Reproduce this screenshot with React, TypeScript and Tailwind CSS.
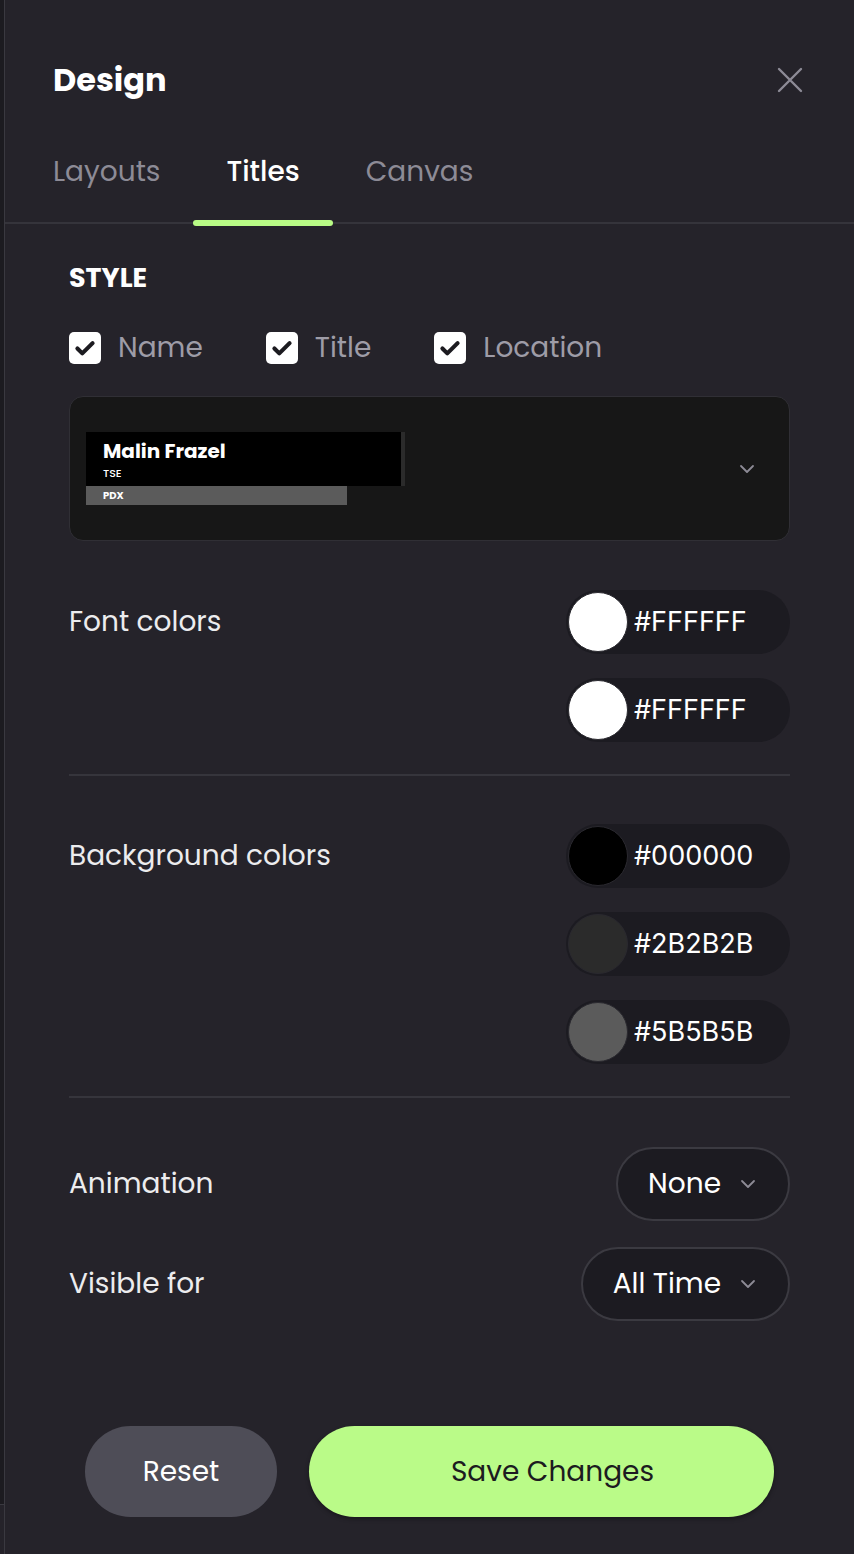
import { useState } from 'react';

const font = "font-['Poppins','Inter','DejaVu_Sans',sans-serif]";

function Chevron({ className = '' }: { className?: string }) {
  return (
    <svg viewBox="0 0 16 10" className={className} fill="none" stroke="currentColor" strokeWidth="1.8" strokeLinecap="round" strokeLinejoin="round">
      <path d="M2 2l6 6 6-6" />
    </svg>
  );
}

function Check({ label, checked, onToggle }: { label: string; checked: boolean; onToggle: () => void }) {
  return (
    <button onClick={onToggle} className="flex items-center gap-[17px]">
      <span className="flex h-[32px] w-[32px] items-center justify-center rounded-[5px] bg-white">
        {checked && (
          <svg viewBox="0 0 24 24" className="h-[26px] w-[26px]" fill="none" stroke="#1c1b20" strokeWidth="3.8" strokeLinecap="round" strokeLinejoin="round">
            <path d="M5 12.5l4.5 4.5L19 7.5" />
          </svg>
        )}
      </span>
      <span className="text-[28px] leading-none text-[#9e9ca7]">{label}</span>
    </button>
  );
}

function ColorPill({ hex }: { hex: string }) {
  return (
    <div className="flex h-[64px] w-[224px] items-center rounded-full bg-[#1c1b21] p-[2px]">
      <span className="h-[60px] w-[60px] rounded-full border border-[#2a292f]" style={{ backgroundColor: hex }} />
      <span className="ml-[6px] font-['Inter',sans-serif] text-[27px] text-white">{hex}</span>
    </div>
  );
}

function Select({ value }: { value: string }) {
  return (
    <button className="flex h-[74px] items-center gap-[19px] rounded-full border-2 border-[#3b3a41] bg-[#1c1b21] pl-[30px] pr-[32px]">
      <span className="text-[28px] text-white">{value}</span>
      <Chevron className="h-[10px] w-[16px] text-[#8d8b96]" />
    </button>
  );
}

export default function App() {
  const [tab, setTab] = useState('Titles');
  const [checks, setChecks] = useState({ Name: true, Title: true, Location: true });
  const tabs = ['Layouts', 'Titles', 'Canvas'];

  return (
    <div className={`flex h-[1554px] w-full bg-[#25232a] ${font}`}>
      <div className="flex w-[4px] flex-col">
        <div className="h-[1504px] bg-[#1c1b20]" />
        <div className="h-px bg-[#3a3940]" />
      </div>
      <div className="w-px bg-[#3a3940]" />

      <div className="flex flex-1 flex-col">
        <div className="mt-[60px] flex h-[40px] items-center justify-between pl-[48px] pr-[51px]">
          <h1 className="text-[32px] font-bold text-white">Design</h1>
          <button className="text-[#8d8b96]">
            <svg viewBox="0 0 26 26" className="h-[26px] w-[26px]" fill="none" stroke="currentColor" strokeWidth="2.4" strokeLinecap="round">
              <path d="M2 2l22 22M24 2L2 24" />
            </svg>
          </button>
        </div>

        <div className="flex h-[124px] border-b-2 border-[#35343b] pl-[15px] pt-[22px]">
          {tabs.map((t) => (
            <button key={t} onClick={() => setTab(t)} className="relative flex items-center px-[33px]">
              <span className={`text-[28px] ${tab === t ? 'font-medium text-white' : 'text-[#8d8b96]'}`}>{t}</span>
              {tab === t && <span className="absolute bottom-[-4px] left-0 right-0 h-[6px] rounded-full bg-[#b9fb86]" />}
            </button>
          ))}
        </div>

        <div className="flex flex-col px-[64px]">
          <h2 className="mt-[38px] h-[32px] text-[27px] font-bold leading-[32px] text-white">STYLE</h2>

          <div className="mt-[38px] flex h-[32px] items-center">
            <Check label="Name" checked={checks.Name} onToggle={() => setChecks({ ...checks, Name: !checks.Name })} />
            <span className="w-[63px]" />
            <Check label="Title" checked={checks.Title} onToggle={() => setChecks({ ...checks, Title: !checks.Title })} />
            <span className="w-[63px]" />
            <Check label="Location" checked={checks.Location} onToggle={() => setChecks({ ...checks, Location: !checks.Location })} />
          </div>

          <div className="mt-[32px] flex h-[145px] items-center justify-between rounded-[14px] border border-[#302f35] bg-[#171717] pl-[16px] pr-[34px]">
            <div className="flex flex-col">
              <div className="flex h-[54px] w-[319px] flex-col justify-center border-r-4 border-[#2b2b2b] bg-black pl-[17px]">
                <span className="text-[20px] font-bold leading-[28px] text-white">Malin Frazel</span>
                <span className="text-[11px] font-medium leading-[16px] text-white">TSE</span>
              </div>
              <div className="flex h-[19px] w-[261px] items-center bg-[#5b5b5b] pl-[17px]">
                <span className="text-[10px] font-bold leading-[14px] text-white">PDX</span>
              </div>
            </div>
            <Chevron className="h-[10px] w-[16px] text-[#8d8b96]" />
          </div>

          <div className="mt-[49px] flex justify-between">
            <span className="flex h-[64px] items-center text-[28px] text-[#ececee]">Font colors</span>
            <div className="flex flex-col gap-[24px]">
              <ColorPill hex="#FFFFFF" />
              <ColorPill hex="#FFFFFF" />
            </div>
          </div>

          <div className="mt-[32px] h-[2px] bg-[#36353c]" />

          <div className="mt-[48px] flex justify-between">
            <span className="flex h-[64px] items-center text-[28px] text-[#ececee]">Background colors</span>
            <div className="flex flex-col gap-[24px]">
              <ColorPill hex="#000000" />
              <ColorPill hex="#2B2B2B" />
              <ColorPill hex="#5B5B5B" />
            </div>
          </div>

          <div className="mt-[32px] h-[2px] bg-[#36353c]" />

          <div className="mt-[49px] flex items-center justify-between">
            <span className="text-[28px] text-[#ececee]">Animation</span>
            <Select value="None" />
          </div>
          <div className="mt-[26px] flex items-center justify-between">
            <span className="text-[28px] text-[#ececee]">Visible for</span>
            <Select value="All Time" />
          </div>

          <div className="mt-[105px] flex gap-[32px] px-[16px]">
            <button className="h-[91px] w-[192px] rounded-full bg-[#4e4d57] text-[28px] text-white">Reset</button>
            <button className="h-[91px] flex-1 rounded-full bg-[#bafb88] pl-[22px] text-[28px] text-[#1c1b20] shadow-[0_2px_4px_rgba(0,0,0,0.35)]">
              Save Changes
            </button>
          </div>
        </div>
      </div>
    </div>
  );
}
